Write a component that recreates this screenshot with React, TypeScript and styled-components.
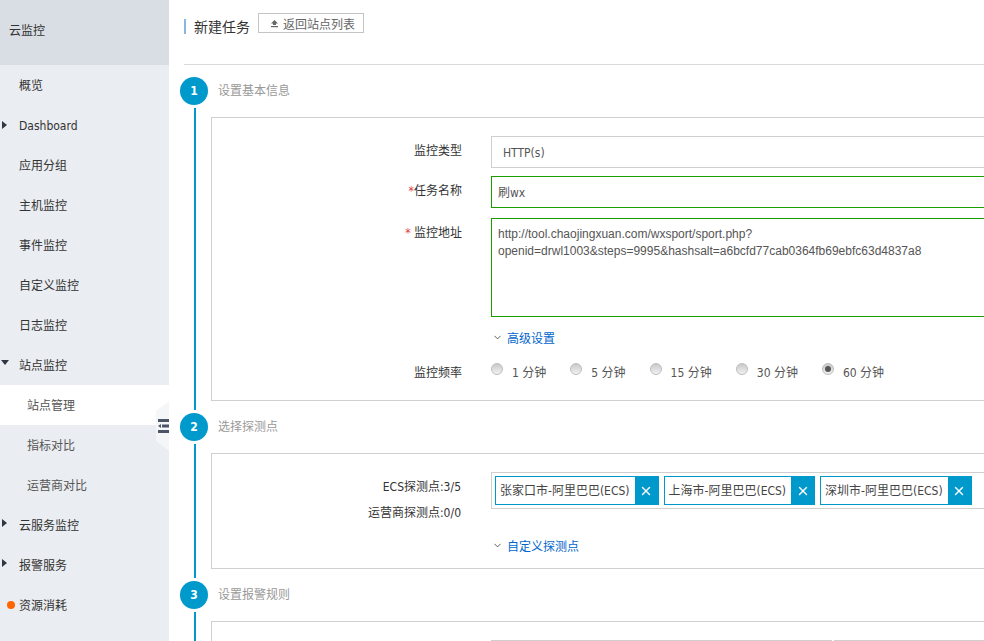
import React, { FC, ReactNode } from "react";
import styled, { createGlobalStyle } from "styled-components";
import { ChevronDown, X } from "lucide-react";

const GlobalStyle = createGlobalStyle`
  html, body {
    margin: 0;
    padding: 0;
    height: 641px;
    overflow: hidden;
    background: #fff;
  }
  body, input, textarea {
    font-family: "DejaVu Sans", "Noto Sans CJK SC", sans-serif;
    font-stretch: condensed;
    font-size: 12px;
    color: #333;
  }
  * { box-sizing: border-box; }
`;

const Page = styled.div`
  display: flex;
  width: 984px;
  height: 641px;
  overflow: hidden;
`;

//  sidebar
const Sidebar = styled.aside`
  position: relative;
  flex: 0 0 169px;
  background: #eaedf1;
`;

const SidebarTitle = styled.div`
  display: flex;
  align-items: center;
  height: 65px;
  padding: 0 0 6px 9px;
  background: #d9dee4;
  color: #333;
`;

const NavRow = styled.div<{ $active?: boolean; $sub?: boolean; $latin?: boolean }>`
  display: flex;
  align-items: center;
  height: 40px;
  padding-left: ${(p) => (p.$sub ? "27px" : "0")};
  padding-top: ${(p) => (p.$latin ? "2px" : "0")};
  padding-bottom: ${(p) => (p.$latin ? "0" : "2px")};
  background: ${(p) => (p.$active ? "#fff" : "transparent")};
  color: ${(p) => (p.$sub ? "#555" : "#333")};
`;

const NavSlot = styled.span`
  display: flex;
  align-items: center;
  flex: 0 0 19px;
  height: 16px;
`;

const ArrowRight = styled.i`
  margin: -3px 0 0 2px;
  border-left: 5px solid #2f3742;
  border-top: 4px solid transparent;
  border-bottom: 4px solid transparent;
`;

const ArrowDown = styled.i`
  margin: -3px 0 0 1px;
  border-top: 5px solid #2f3742;
  border-left: 4px solid transparent;
  border-right: 4px solid transparent;
`;

const Dot = styled.i`
  width: 8px;
  height: 8px;
  margin: 2px 0 0 7px;
  border-radius: 50%;
  background: #ff6600;
`;

const Collapse = styled.div`
  position: absolute;
  top: 401px;
  right: 0;
  display: flex;
  align-items: center;
  justify-content: flex-end;
  width: 13px;
  height: 50px;
  background: #f4f6f8;
  clip-path: polygon(100% 0, 100% 100%, 0 80%, 0 20%);
`;

//  main area
const Main = styled.main`
  flex: 1;
  min-width: 0;
  padding-left: 11px;
`;

const Header = styled.header`
  display: flex;
  align-items: flex-start;
  height: 65px;
  margin-left: 4px;
  padding-top: 13px;
  border-bottom: 1px solid #d9d9d9;
`;

const Title = styled.h1`
  height: 15px;
  margin: 6px 8px 0 0;
  padding-left: 8px;
  border-left: 2px solid #88b7e0;
  font-size: 14px;
  font-weight: 400;
  line-height: 17px;
  color: #333;
`;

const BackButton = styled.button`
  display: flex;
  align-items: center;
  gap: 4px;
  width: 106px;
  height: 20px;
  padding: 0 0 0 11px;
  border: 1px solid #c4c4c4;
  background: #fff;
  font: inherit;
  color: #666;
`;

const Steps = styled.div`
  margin-top: 12px;
`;

const StepRow = styled.section<{ $height?: number }>`
  display: flex;
  gap: 3px;
  height: ${(p) => (p.$height ? `${p.$height}px` : "auto")};
`;

const Rail = styled.div`
  display: flex;
  flex-direction: column;
  flex: 0 0 28px;
`;

const Circle = styled.div`
  display: flex;
  align-items: center;
  justify-content: center;
  flex: 0 0 28px;
  border-radius: 50%;
  background: #0099cc;
  color: #fff;
  font-size: 12px;
  font-weight: 600;
`;

const RailLine = styled.div`
  flex: 1;
  width: 2px;
  margin: 3px 0 3px 14px;
  background: #0099cc;
`;

const StepBody = styled.div`
  width: 900px;
`;

const StepTitle = styled.div`
  height: 40px;
  padding-left: 7px;
  line-height: 28px;
  color: #999;
`;

const Card = styled.div<{ $height: number }>`
  height: ${(p) => p.$height}px;
  padding-top: 18px;
  border: 1px solid #d0d0d0;
`;

const FormRow = styled.div<{ $gap?: number }>`
  display: grid;
  grid-template-columns: 250px 1fr;
  column-gap: 29px;
  margin-bottom: ${(p) => p.$gap ?? 0}px;
`;

const Label = styled.label<{ $top?: number }>`
  padding-top: ${(p) => p.$top ?? 5}px;
  line-height: 20px;
  text-align: right;
  color: #333;
`;

const Required = styled.span`
  color: #e4393c;
`;

const SelectBox = styled.div`
  display: flex;
  align-items: center;
  height: 32px;
  width: 600px;
  padding: 2px 0 0 11px;
  border: 1px solid #cfcfcf;
  color: #555;
`;

const TextInput = styled.input`
  display: block;
  width: 600px;
  height: 32px;
  padding: 0 6px 2px;
  border: 1px solid #1a9e00;
  outline: none;
  color: #555;
`;

const TextArea = styled.textarea`
  display: block;
  width: 600px;
  height: 99px;
  padding: 7px 6px 6px;
  border: 1px solid #1a9e00;
  outline: none;
  resize: none;
  font-family: "Liberation Sans", "Noto Sans CJK SC", sans-serif;
  line-height: 17px;
  color: #555;
`;

const ToggleLink = styled.div`
  display: flex;
  align-items: center;
  gap: 4px;
  height: 20px;
  padding-left: 1px;
  color: #0066cc;
`;

const RadioGroup = styled.div`
  display: flex;
  gap: 24px;
  height: 24px;
  align-items: center;
`;

const RadioItem = styled.span`
  display: flex;
  align-items: center;
  gap: 9px;
  color: #555;
`;

const RadioDot = styled.i<{ $checked?: boolean }>`
  display: flex;
  align-items: center;
  justify-content: center;
  width: 12px;
  height: 12px;
  margin-top: -4px;
  border: 1px solid #bdbdbd;
  border-radius: 50%;
  background: linear-gradient(#c9c9c9, #f1f1f1);

  &::after {
    content: "";
    display: ${(p) => (p.$checked ? "block" : "none")};
    width: 6px;
    height: 6px;
    border-radius: 50%;
    background: #555;
  }
`;

const ProbeLabels = styled.div`
  display: flex;
  flex-direction: column;
  gap: 6px;
  padding: 5px 1px 0 0;
  line-height: 20px;
  text-align: right;
  color: #333;
`;

const TagBox = styled.div`
  display: flex;
  gap: 5px;
  width: 600px;
  height: 37px;
  padding: 3px;
  border: 1px solid #cfcfcf;
`;

const Tag = styled.div`
  display: flex;
  align-items: stretch;
  height: 29px;
  border: 1px solid #0099cc;
`;

const TagText = styled.span`
  display: flex;
  align-items: center;
  padding: 0 5px 2px 4px;
  white-space: nowrap;
  color: #444;
`;

const TagClose = styled.span`
  display: flex;
  align-items: center;
  justify-content: center;
  width: 23px;
  background: #0099cc;
  color: #fff;
`;

const HalfInput = styled.div<{ $width: number }>`
  flex: 0 0 ${(p) => p.$width}px;
  height: 32px;
  border: 1px solid #cfcfcf;
`;

const SplitControls = styled.div`
  display: flex;
  gap: 2px;
`;

const navItems = [
  { text: "概览" },
  { text: "Dashboard", icon: "right", latin: true },
  { text: "应用分组" },
  { text: "主机监控" },
  { text: "事件监控" },
  { text: "自定义监控" },
  { text: "日志监控" },
  { text: "站点监控", icon: "down" },
  { text: "站点管理", sub: true, active: true },
  { text: "指标对比", sub: true },
  { text: "运营商对比", sub: true },
  { text: "云服务监控", icon: "right" },
  { text: "报警服务", icon: "right" },
  { text: "资源消耗", icon: "dot" },
];

const frequencies = [
  { text: "1 分钟" },
  { text: "5 分钟" },
  { text: "15 分钟" },
  { text: "30 分钟" },
  { text: "60 分钟", checked: true },
];

const probes = ["张家口市-阿里巴巴(ECS)", "上海市-阿里巴巴(ECS)", "深圳市-阿里巴巴(ECS)"];

const url =
  "http://tool.chaojingxuan.com/wxsport/sport.php?openid=drwl1003&steps=9995&hashsalt=a6bcfd77cab0364fb69ebfc63d4837a8";

interface StepProps {
  index: number;
  title: string;
  height?: number;
  children: ReactNode;
}

const Step: FC<StepProps> = ({ index, title, height, children }) => (
  <StepRow $height={height}>
    <Rail>
      <Circle>{index}</Circle>
      <RailLine />
    </Rail>
    <StepBody>
      <StepTitle>{title}</StepTitle>
      {children}
    </StepBody>
  </StepRow>
);

const App: FC = () => (
  <>
    <GlobalStyle />
    <Page>
      <Sidebar>
        <SidebarTitle>云监控</SidebarTitle>
        {navItems.map((item) => (
          <NavRow key={item.text} $sub={item.sub} $active={item.active} $latin={item.latin}>
            {!item.sub && (
              <NavSlot>
                {item.icon === "right" && <ArrowRight />}
                {item.icon === "down" && <ArrowDown />}
                {item.icon === "dot" && <Dot />}
              </NavSlot>
            )}
            {item.text}
          </NavRow>
        ))}
        <Collapse>
          <svg width="11" height="14" viewBox="0 0 11 14">
            <rect x="0" y="0" width="11" height="3" fill="#4c5566" />
            <rect x="4" y="5.5" width="7" height="3" fill="#4c5566" />
            <path d="M0 7 L3 5 V9 Z" fill="#4c5566" />
            <rect x="0" y="11" width="11" height="3" fill="#4c5566" />
          </svg>
        </Collapse>
      </Sidebar>

      <Main>
        <Header>
          <Title>新建任务</Title>
          <BackButton>
            <svg width="9" height="9" viewBox="0 0 9 9">
              <path d="M4.5 1 L8 4.5 H6 V6 H3 V4.5 H1 Z" fill="#666" />
              <rect x="1" y="7" width="7" height="1.2" fill="#666" />
            </svg>
            返回站点列表
          </BackButton>
        </Header>

        <Steps>
          <Step index={1} title="设置基本信息" height={336}>
            <Card $height={284}>
              <FormRow $gap={8}>
                <Label>监控类型</Label>
                <SelectBox>HTTP(s)</SelectBox>
              </FormRow>
              <FormRow $gap={10}>
                <Label>
                  <Required>*</Required>任务名称
                </Label>
                <TextInput readOnly value="刷wx" />
              </FormRow>
              <FormRow $gap={10}>
                <Label>
                  <Required>*</Required> 监控地址
                </Label>
                <TextArea readOnly value={url} />
              </FormRow>
              <FormRow $gap={12}>
                <span />
                <ToggleLink>
                  <ChevronDown size={11} color="#555" strokeWidth={2} />
                  高级设置
                </ToggleLink>
              </FormRow>
              <FormRow>
                <Label $top={4}>监控频率</Label>
                <RadioGroup>
                  {frequencies.map((f) => (
                    <RadioItem key={f.text}>
                      <RadioDot $checked={f.checked} />
                      {f.text}
                    </RadioItem>
                  ))}
                </RadioGroup>
              </FormRow>
            </Card>
          </Step>

          <Step index={2} title="选择探测点" height={168}>
            <Card $height={116}>
              <FormRow $gap={12}>
                <ProbeLabels>
                  <span>ECS探测点:3/5</span>
                  <span>运营商探测点:0/0</span>
                </ProbeLabels>
                <TagBox>
                  {probes.map((p) => (
                    <Tag key={p}>
                      <TagText>{p}</TagText>
                      <TagClose>
                        <X size={14} strokeWidth={2.4} />
                      </TagClose>
                    </Tag>
                  ))}
                </TagBox>
              </FormRow>
              <FormRow>
                <span />
                <ToggleLink>
                  <ChevronDown size={11} color="#555" strokeWidth={2} />
                  自定义探测点
                </ToggleLink>
              </FormRow>
            </Card>
          </Step>

          <Step index={3} title="设置报警规则">
            <Card $height={120}>
              <FormRow>
                <span />
                <SplitControls>
                  <HalfInput $width={341} />
                  <HalfInput $width={200} />
                </SplitControls>
              </FormRow>
            </Card>
          </Step>
        </Steps>
      </Main>
    </Page>
  </>
);

export default App;
